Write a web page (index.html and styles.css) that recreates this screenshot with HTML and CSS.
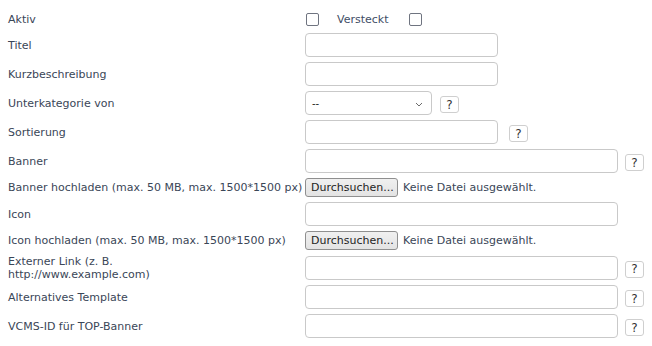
FILE: index.html
```html
<!DOCTYPE html>
<html lang="de">
<head>
<meta charset="utf-8">
<link rel="stylesheet" href="styles.css">
</head>
<body>
<form class="form">
  <div class="label">Aktiv</div>
  <div class="field">
    <span class="check"></span>
    <span class="check-label">Versteckt</span>
    <span class="check"></span>
  </div>

  <div class="label">Titel</div>
  <div class="field"><span class="input w-mid"></span></div>

  <div class="label">Kurzbeschreibung</div>
  <div class="field"><span class="input w-mid"></span></div>

  <div class="label">Unterkategorie von</div>
  <div class="field">
    <span class="select">--<svg class="chev" width="8" height="5" viewBox="0 0 8 5"><path d="M1 1l3 3 3-3" fill="none" stroke="#6b6b6b" stroke-width="1"/></svg></span>
    <span class="help help-sel">?</span>
  </div>

  <div class="label">Sortierung</div>
  <div class="field"><span class="input w-mid"></span><span class="help help-mid">?</span></div>

  <div class="label">Banner</div>
  <div class="field"><span class="input w-wide"></span><span class="help help-wide">?</span></div>

  <div class="label">Banner hochladen (max. 50 MB, max. 1500*1500 px)</div>
  <div class="field"><span class="file-btn">Durchsuchen...</span><span class="file-text">Keine Datei ausgewählt.</span></div>

  <div class="label">Icon</div>
  <div class="field"><span class="input w-wide"></span></div>

  <div class="label">Icon hochladen (max. 50 MB, max. 1500*1500 px)</div>
  <div class="field"><span class="file-btn">Durchsuchen...</span><span class="file-text">Keine Datei ausgewählt.</span></div>

  <div class="label label-two">Externer Link (z. B.<br>http://www.example.com)</div>
  <div class="field"><span class="input w-wide"></span><span class="help help-wide">?</span></div>

  <div class="label">Alternatives Template</div>
  <div class="field"><span class="input w-wide"></span><span class="help help-wide">?</span></div>

  <div class="label">VCMS-ID für TOP-Banner</div>
  <div class="field"><span class="input w-wide"></span><span class="help help-wide">?</span></div>
</form>
</body>
</html>
```
FILE: styles.css
```css
html, body {
  margin: 0;
  padding: 0;
  background: #ffffff;
}
body {
  font-family: "DejaVu Sans", Verdana, sans-serif;
  font-size: 11px;
  color: #3a4657;
}
.form {
  display: grid;
  grid-template-columns: 297px 1fr;
  grid-template-rows: 18px 24px 24px 24px 24px 24px 19px 24px 19px 25px 24px 24px;
  row-gap: 5px;
  padding: 10px 0 0 8px;
}
.label {
  display: flex;
  align-items: center;
  white-space: nowrap;
}
.label-two {
  white-space: normal;
  line-height: 13px;
  padding-top: 1px;
}
.field {
  display: flex;
  align-items: center;
}
.check {
  display: inline-block;
  width: 11px;
  height: 11px;
  border: 1px solid #6f7480;
  border-radius: 2px;
  margin-left: 1px;
}
.check-label {
  margin: 0 19px 0 18px;
  color: #414e66;
}
.input {
  display: inline-block;
  height: 22px;
  border: 1px solid #c9c9c9;
  border-radius: 4px;
  background: #fff;
}
.w-mid { width: 191px; }
.w-wide { width: 311px; }
.select {
  position: relative;
  display: inline-flex;
  align-items: center;
  width: 119px;
  height: 22px;
  padding-left: 6px;
  border: 1px solid #c9c9c9;
  border-radius: 4px;
  font-size: 10px;
  color: #222;
}
.chev {
  position: absolute;
  right: 8px;
  top: 10px;
}
.help {
  display: inline-flex;
  align-items: center;
  justify-content: center;
  width: 17px;
  height: 15px;
  margin-top: 3px;
  border: 1px solid #cfcfcf;
  border-radius: 3px;
  font-family: "DejaVu Sans", sans-serif;
  font-weight: normal;
  font-size: 12px;
  color: #333;
  background: #fff;
}
.help-sel { margin-left: 8px; }
.help-mid { margin-left: 11px; }
.help-wide { margin-left: 7px; }
.file-btn {
  display: inline-flex;
  align-items: center;
  box-sizing: border-box;
  height: 19px;
  padding: 0 5px;
  width: 93px;
  border: 1px solid #8f8f8f;
  border-radius: 3px;
  background: linear-gradient(#f0f0f0, #e3e3e3);
  color: #1e1e1e;
}
.file-text {
  margin-left: 5px;
}
```
